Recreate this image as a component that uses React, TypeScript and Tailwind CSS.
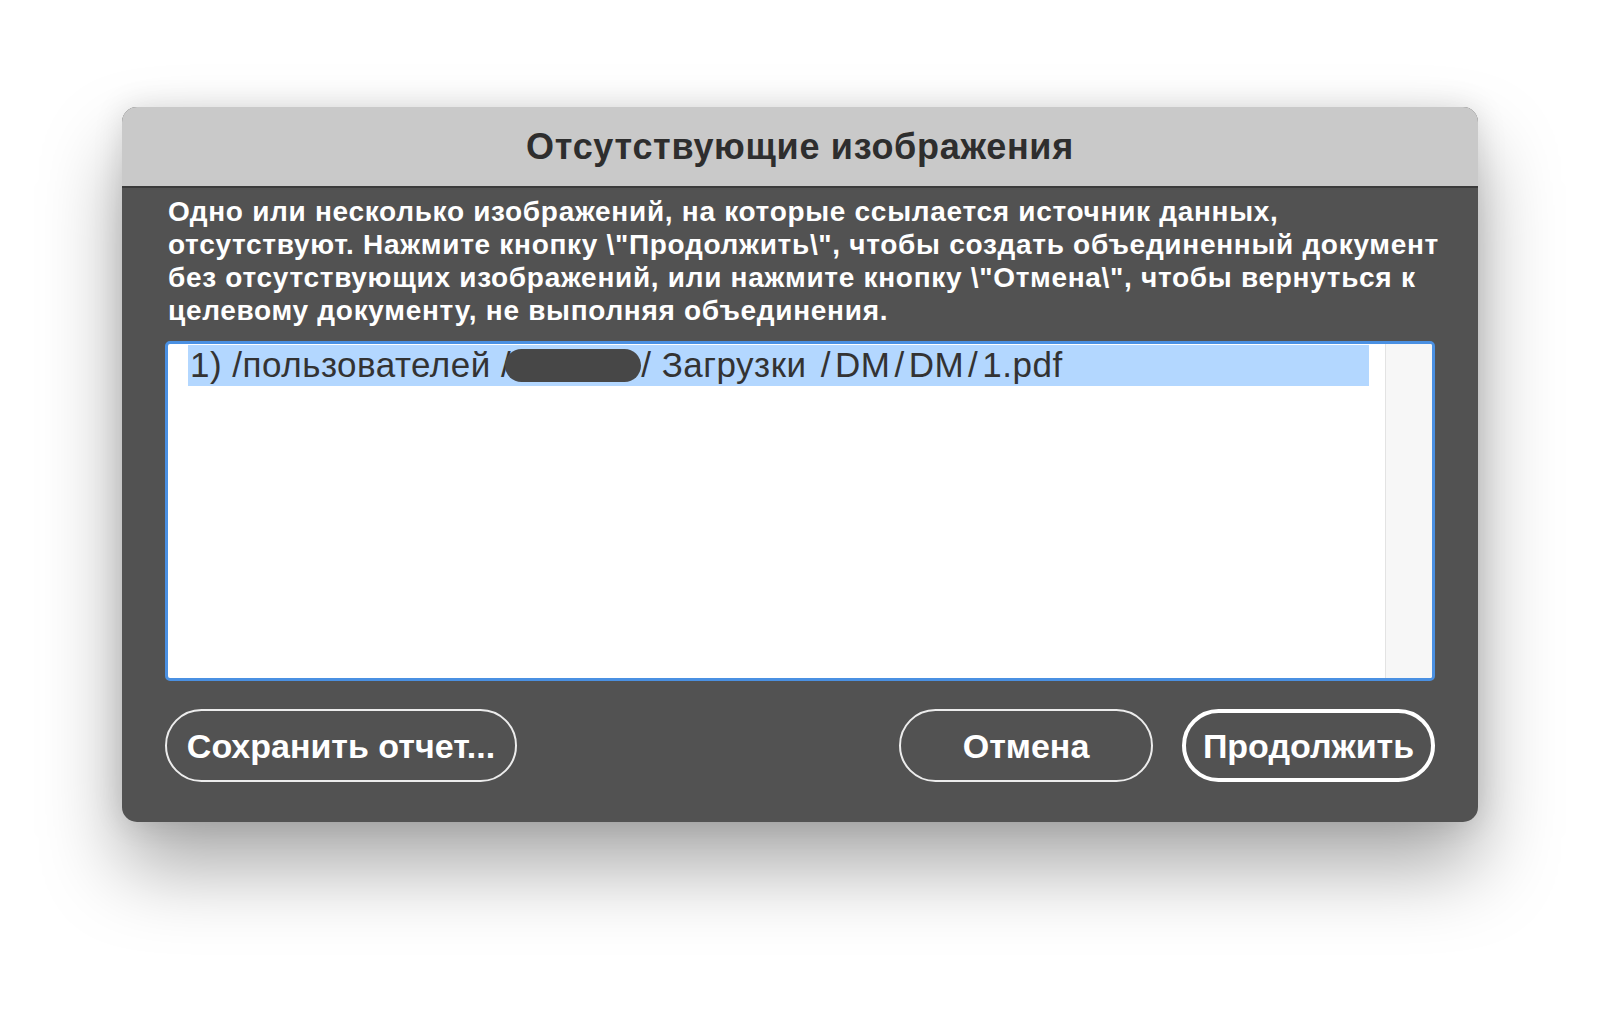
const font = { fontFamily: '"Liberation Sans", Arial, sans-serif' };

const Button = ({ label, width, primary }: { label: string; width: string; primary?: boolean }) => (
  <button
    type="button"
    className={`${width} h-[73px] rounded-full flex items-center justify-center text-white font-bold text-[34px] leading-none ${
      primary ? "border-[4px] border-white" : "border-2 border-[#ececec]"
    }`}
  >
    {label}
  </button>
);

const Slash = () => <span className="mx-[4px]">/</span>;

export default function App() {
  return (
    <div className="min-h-[1033px] w-full bg-white flex justify-center pt-[107px]" style={font}>
      <div className="w-[1356px] h-[715px] rounded-[15px] overflow-hidden bg-[#525252] flex flex-col shadow-[0_45px_80px_rgba(0,0,0,0.34),0_0_30px_rgba(0,0,0,0.12)]">
        <div className="h-[81px] bg-[#c9c9c9] border-b-[2px] border-[#3a3a3a] flex items-center justify-center">
          <h1 className="text-[36px] font-bold text-[#2e2e2e] tracking-[0.7px]">
            Отсутствующие изображения
          </h1>
        </div>

        <div className="flex-1 flex flex-col px-[43px] pt-[7px]">
          <p className="text-white font-bold text-[28px] leading-[33px] tracking-[0.7px] pl-[3px] whitespace-nowrap">
            Одно или несколько изображений, на которые ссылается источник данных,
            <br />
            отсутствуют. Нажмите кнопку \"Продолжить\", чтобы создать объединенный документ
            <br />
            без отсутствующих изображений, или нажмите кнопку \"Отмена\", чтобы вернуться к
            <br />
            целевому документу, не выполняя объединения.
          </p>

          <div className="mt-[14px] h-[340px] rounded-[5px] border-[3px] border-[#4a90e2] bg-white flex overflow-hidden">
            <div className="flex-1 pl-[20px] pr-[16px] pt-[1px]">
              <div className="h-[41px] bg-[#b3d7ff] flex items-center pl-[2px] text-[35px] text-[#333333] tracking-[0.5px] whitespace-nowrap">
                <span>1) /пользователей /</span>
                <span className="inline-block w-[136px] h-[33px] rounded-full bg-[#474747] -ml-[6px]" />
                <span>
                  / Загрузки <Slash />DM<Slash />DM<Slash />1.pdf
                </span>
              </div>
            </div>
            <div className="w-[47px] bg-[#f7f7f7] border-l border-[#e3e3e3]" />
          </div>

          <div className="mt-[28px] flex items-center">
            <Button label="Сохранить отчет..." width="w-[352px]" />
            <div className="flex-1" />
            <Button label="Отмена" width="w-[254px]" />
            <div className="w-[29px]" />
            <Button label="Продолжить" width="w-[253px]" primary />
          </div>
        </div>
      </div>
    </div>
  );
}
